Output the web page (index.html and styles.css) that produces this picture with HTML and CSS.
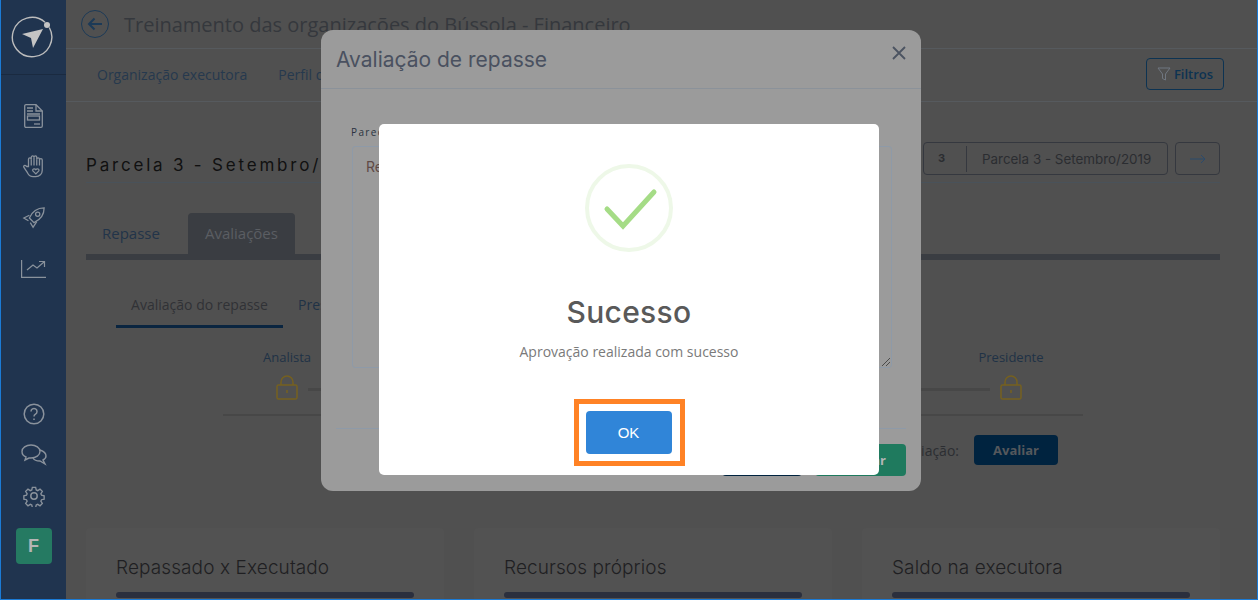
FILE: index.html
```html
<!DOCTYPE html>
<html lang="pt-BR">
    <head>
        <meta charset="UTF-8">
        <meta name="viewport" content="width=device-width, initial-scale=1.0">
        <title>Treinamento das organizações do Bússola - Financeiro</title>
        <link rel="stylesheet" href="styles.css">
    </head>
    <body>
        <div class="app">
            <nav class="sidebar">
                <div class="logo">
                    <svg width="42" height="42" viewBox="0 0 42 42" fill="none">
                        <path d="M38.300 11.500A19.700 19.700 0 1 1 34 6.200" stroke="#bdbdbd" stroke-width="1.400"/>
                        <circle cx="36" cy="9" r="3" fill="#c4c4c4"/>
                        <path d="M32 13 11 18l9 4 2 10z" fill="#c4c4c4"/>
                    </svg>
                </div>
                <div class="nav-icons">
                    <svg width="19" height="24" viewBox="0 0 19 24" fill="none" stroke="#8a929c" stroke-width="1.300">
                        <path d="M2 .7h10l6.300 6.300v15a1.300 1.300 0 0 1-1.300 1.300H2A1.300 1.300 0 0 1 .7 22V2A1.300 1.300 0 0 1 2 .7z"/>
                        <path d="M12 .7V7h6.300M3 4h6M3 7h6M3 10h13"/>
                        <rect x="3.500" y="12" width="12" height="4"/>
                        <path d="M10 20h6"/>
                    </svg>
                    <svg width="22" height="25" viewBox="0 0 24 26" fill="none" stroke="#8a929c" stroke-width="1.400">
                        <path d="M6 13V5a1.500 1.500 0 0 1 3 0V3a1.500 1.500 0 0 1 3 0 1.500 1.500 0 0 1 3 0v2a1.500 1.500 0 0 1 3 0v1a1.500 1.500 0 0 1 3 0v11c0 4-3 7-7 7h-3c-3 0-5-2-6-4l-4-6c-1-2 1-3 3-1z"/>
                        <path d="M9 5v7M12 3v9M15 5v7M18 6v6"/>
                        <path d="M14 21l-3-3c-1.500-2 1.500-3.500 3-1.500 1.500-2 4.500-.5 3 1.500z"/>
                    </svg>
                    <svg class="nav-rocket" width="24" height="24" viewBox="0 0 26 26" fill="none" stroke="#8a929c" stroke-width="1.400">
                        <path d="M8 13C11 6 17 2 24 2c0 7-4 13-11 16z"/>
                        <circle cx="17" cy="9" r="2.300"/>
                        <path d="M8 10 2 13l5 3M16 17l-4 6-3-5"/>
                    </svg>
                    <svg class="nav-chart" width="25" height="18" viewBox="0 0 25 18" fill="none" stroke="#8a929c" stroke-width="1.200">
                        <path d="M.6 0v17.400H25"/>
                        <path d="M6 10l6-5 4 3 7-6M18 1.500h5.500V7"/>
                    </svg>
                </div>
                <div class="nav-bottom">
                    <svg width="22" height="22" viewBox="0 0 22 22" fill="none" stroke="#8a929c" stroke-width="1.500">
                        <circle cx="11" cy="11" r="9.800"/>
                        <path d="M8 8.500a3 3 0 1 1 4.500 2.600c-1 .6-1.500 1.200-1.500 2.400"/>
                        <path d="M11 15.500v1.500"/>
                    </svg>
                    <svg width="26" height="22" viewBox="0 0 26 22" fill="none" stroke="#8a929c" stroke-width="1.400">
                        <path d="M10 1c5 0 9 3 9 6.500S15 14 10 14H8l-4 2 1-3C2.500 12 1 10 1 7.500 1 4 5 1 10 1z"/>
                        <path d="M19 6c3 1 6 3 6 6 0 2-1 3-3 4l2 4-5-3c-3 0-6-1-7-3"/>
                    </svg>
                    <svg width="22" height="22" viewBox="0 0 24 24" fill="none" stroke="#8a929c" stroke-width="1.600">
                        <circle cx="12" cy="12" r="3.500"/>
                        <path d="M10 1.500h4l.7 3.200 1.800.8 2.800-1.800 2.800 2.800-1.800 2.800.8 1.800 3.200.7v4l-3.200.7-.8 1.800 1.800 2.800-2.800 2.800-2.800-1.800-1.800.8-.7 3.200h-4l-.7-3.200-1.800-.8-2.800 1.800-2.800-2.800 1.800-2.800-.8-1.800-3.200-.7v-4l3.200-.7.8-1.800-1.800-2.800 2.800-2.800 2.800 1.800 1.800-.8z" transform="translate(1.200 1.200) scale(.9)"/>
                    </svg>
                    <div class="avatar">F</div>
                </div>
            </nav>

            <main class="main">
                <header class="title-row">
                    <span class="back-btn">
                        <svg width="16" height="14" viewBox="0 0 16 14" fill="none" stroke="#1c3a57" stroke-width="2">
                            <path d="M15 7H2M7.500 1.500 2 7l5.500 5.500"/>
                        </svg>
                    </span>
                    <h1>Treinamento das organizações do Bússola - Financeiro</h1>
                </header>

                <div class="top-tabs">
                    <a>Organização executora</a>
                    <a>Perfil da organização</a>
                    <button class="filter-btn">
                        <svg width="14" height="14" viewBox="0 0 14 14" fill="none" stroke="#6f7680" stroke-width="1">
                            <path d="M1 1h12L8.500 7v6l-3-1.500V7z"/>
                        </svg>
                        Filtros
                    </button>
                </div>

                <section class="content">
                    <div class="parcela-row">
                        <h2>Parcela 3 - Setembro/2019</h2>
                        <div class="parcela-select">
                            <span class="parcela-num">3</span>
                            <span class="parcela-name">Parcela 3 - Setembro/2019</span>
                        </div>
                        <button class="next-btn">
                            <svg width="16" height="10" viewBox="0 0 16 10" fill="none" stroke="#2b4a6b" stroke-width="1">
                                <path d="M0 5h15M11 1l4 4-4 4"/>
                            </svg>
                        </button>
                    </div>

                    <div class="tabs">
                        <a>Repasse</a>
                        <a class="active">Avaliações</a>
                    </div>

                    <div class="panel">
                        <div class="sub-tabs">
                            <a class="active">Avaliação do repasse</a>
                            <a>Prestação de contas</a>
                        </div>
                        <div class="steps">
                            <div class="step">
                                <span>Analista</span>
                                <svg width="22" height="26" viewBox="0 0 22 26" fill="none" stroke="#75601f" stroke-width="1.500">
                                    <rect x="1" y="10" width="20" height="14" rx="1.500"/>
                                    <path d="M5 10V7a6 6 0 0 1 12 0v3M11 15v3"/>
                                </svg>
                            </div>
                            <div class="step-line"></div>
                            <div class="step">
                                <span>Presidente</span>
                                <svg width="22" height="26" viewBox="0 0 22 26" fill="none" stroke="#75601f" stroke-width="1.500">
                                    <rect x="1" y="10" width="20" height="14" rx="1.500"/>
                                    <path d="M5 10V7a6 6 0 0 1 12 0v3M11 15v3"/>
                                </svg>
                            </div>
                        </div>
                        <div class="panel-actions">
                            <span>Avaliação:</span>
                            <button class="avaliar-btn">Avaliar</button>
                        </div>
                    </div>

                    <div class="cards">
                        <div class="card">
                            <h3>Repassado x Executado</h3>
                            <div class="bar"></div>
                        </div>
                        <div class="card">
                            <h3>Recursos próprios</h3>
                            <div class="bar"></div>
                        </div>
                        <div class="card">
                            <h3>Saldo na executora</h3>
                            <div class="bar"></div>
                        </div>
                    </div>
                </section>
            </main>
        </div>

        <div class="modal">
            <div class="modal-head">
                <h4>Avaliação de repasse</h4>
                <svg width="14" height="14" viewBox="0 0 14 14" fill="none" stroke="#4b5361" stroke-width="1.800">
                    <path d="M1 1l12 12M13 1 1 13"/>
                </svg>
            </div>
            <div class="modal-body">
                <label>Parecer</label>
                <div class="fake-textarea">Recurso aprovado
                    <svg class="grip" width="8" height="8" viewBox="0 0 8 8" stroke="#4a4a4a" stroke-width="1">
                        <path d="M0 8l8-8M4 8l4-4"/>
                    </svg>
                </div>
            </div>
            <div class="modal-foot">
                <button class="btn-cancel">Cancelar</button>
                <button class="btn-save">Salvar</button>
            </div>
        </div>

        <div class="alert">
            <svg class="alert-icon" width="88" height="88" viewBox="0 0 88 88" fill="none">
                <circle cx="44" cy="44" r="42" stroke="#eef8e8" stroke-width="4"/>
                <path d="M22 45l16 17 31-34" stroke="#a5dc86" stroke-width="5" stroke-linecap="round"/>
            </svg>
            <h5>Sucesso</h5>
            <p>Aprovação realizada com sucesso</p>
            <div class="ok-mark">
                <button class="ok-btn">OK</button>
            </div>
        </div>
    </body>
</html>
```

FILE: styles.css
```css
* {
    box-sizing: border-box;
}

body {
    margin: 0;
    width: 1258px;
    height: 600px;
    overflow: hidden;
    font-family: "Open Sans", sans-serif;
    background-color: #505050;
    border: 1px solid #1b7bd6;
    border-top: none;
}

h1, h2, h3, h4, h5, p {
    margin: 0;
    font-weight: normal;
}

button {
    font-family: inherit;
    border: none;
}

.app {
    display: flex;
    height: 599px;
}

/* sidebar */
.sidebar {
    width: 65px;
    flex: none;
    display: flex;
    flex-direction: column;
    align-items: center;
    background-color: #20344f;
}

.logo {
    width: 100%;
    height: 75px;
    display: flex;
    align-items: center;
    justify-content: center;
    border-bottom: 1px solid #1a2a40;
    padding-right: 4px;
}

.nav-icons {
    display: flex;
    flex-direction: column;
    align-items: center;
    gap: 26px;
    margin-top: 29px;
}

.nav-rocket {
    margin-top: 1px;
}

.nav-chart {
    margin-top: 4px;
}

.nav-bottom {
    margin-top: auto;
    display: flex;
    flex-direction: column;
    align-items: center;
    gap: 19px;
    padding-bottom: 35px;
}

.avatar {
    width: 36px;
    height: 36px;
    margin-top: 2px;
    border-radius: 4px;
    background-color: #257a62;
    color: #b5b5b5;
    font-family: "Liberation Sans", sans-serif;
    font-size: 18px;
    font-weight: bold;
    line-height: 36px;
    text-align: center;
}

/* main area */
.main {
    flex: 1;
    min-width: 0;
}

.title-row {
    height: 49px;
    display: flex;
    align-items: center;
    gap: 15px;
    padding-left: 15px;
    border-bottom: 1px solid #565a5e;
}

.back-btn {
    width: 28px;
    height: 28px;
    display: flex;
    align-items: center;
    justify-content: center;
    border: 1px solid #1c3a57;
    border-radius: 50%;
}

.title-row h1 {
    font-size: 20px;
    color: #35383d;
    white-space: nowrap;
}

.top-tabs {
    height: 53px;
    display: flex;
    align-items: center;
    gap: 31px;
    padding: 0 33px 2px 31px;
    border-bottom: 1px solid #565a5e;
    font-size: 14px;
    color: #26394e;
}

.top-tabs a {
    white-space: nowrap;
}

.filter-btn {
    margin-left: auto;
    width: 78px;
    height: 32px;
    display: flex;
    align-items: center;
    justify-content: center;
    gap: 3px;
    background: none;
    border: 1px solid #0d3352;
    border-radius: 4px;
    color: #0d3352;
    font-size: 13px;
    font-weight: 600;
}

.content {
    padding: 0 37px 0 20px;
}

.parcela-row {
    height: 81px;
    display: flex;
    align-items: flex-end;
    padding-bottom: 7px;
    border-bottom: 1px solid #49525a;
}

.parcela-row h2 {
    font-family: Inter, sans-serif;
    font-size: 17px;
    letter-spacing: 2.800px;
    color: #111;
    white-space: nowrap;
}

.parcela-select {
    margin-left: auto;
    width: 245px;
    height: 33px;
    display: flex;
    align-items: center;
    border: 1px solid #35383f;
    border-radius: 4px;
    font-family: Inter, sans-serif;
    font-size: 13.400px;
    color: #2b2d31;
}

.parcela-num {
    width: 43px;
    height: 26px;
    line-height: 24px;
    padding-left: 14px;
    border-right: 1px solid #35383f;
    font-size: 11px;
    font-weight: 700;
}

.parcela-name {
    padding-left: 15px;
    white-space: nowrap;
}

.next-btn {
    width: 45px;
    height: 33px;
    margin-left: 7px;
    background: none;
    border: 1px solid #35383f;
    border-radius: 4px;
}

.tabs {
    height: 71px;
    display: flex;
    align-items: flex-end;
    font-size: 15px;
    color: #223449;
}

.tabs a {
    height: 41px;
    line-height: 41px;
    padding: 0 16px;
}

.tabs a.active {
    margin-left: 12px;
    padding: 0 17px;
    background-color: #3a3d42;
    border-radius: 4px 4px 0 0;
    color: #5b5e63;
}

.panel {
    height: 274px;
    padding: 0 30px;
    border-top: 6px solid #3a3d42;
}

.sub-tabs {
    height: 68px;
    display: flex;
    align-items: flex-end;
    gap: 15px;
    font-size: 14px;
    color: #1f3246;
}

.sub-tabs a {
    height: 42px;
    line-height: 38px;
    white-space: nowrap;
}

.sub-tabs a.active {
    width: 167px;
    text-align: center;
    color: #303236;
    border-bottom: 3px solid #0a2540;
}

.steps {
    height: 88px;
    width: 860px;
    margin: 0 0 0 107px;
    padding: 20px 42px 0 34px;
    display: flex;
    justify-content: space-between;
    border-bottom: 2px solid #474747;
}

.step {
    width: 60px;
    display: flex;
    flex-direction: column;
    align-items: center;
    gap: 9px;
    font-size: 13px;
    color: #1f3246;
}

.step-line {
    flex: 1;
    height: 3px;
    margin: 40px -9px 0;
    background-color: #474747;
}

.panel-actions {
    display: flex;
    align-items: center;
    justify-content: flex-end;
    gap: 15px;
    padding: 19px 132px 0 0;
    font-size: 14px;
    color: #2c2e32;
}

.avaliar-btn {
    width: 84px;
    height: 30px;
    background-color: #00233f;
    border-radius: 4px;
    color: #55585c;
    font-size: 13px;
    font-weight: 700;
}

.cards {
    display: flex;
    gap: 30px;
}

.card {
    width: 358px;
    height: 100px;
    padding: 0 30px;
    background-color: #525252;
    border-radius: 4px;
}

.card h3 {
    font-family: Inter, sans-serif;
    font-size: 19px;
    font-weight: 300;
    letter-spacing: .1px;
    color: #1f1f22;
    line-height: 24px;
    padding-top: 28px;
    box-sizing: content-box;
}

.bar {
    width: 298px;
    height: 6px;
    margin-top: 12px;
    background-color: #2b2f3d;
    border-radius: 3px;
}

/* first modal, dimmed by the alert */
.modal {
    position: fixed;
    left: 321px;
    top: 30px;
    width: 600px;
    height: 461px;
    background-color: #9b9b9b;
    border-radius: 12px;
}

.modal-head {
    height: 59px;
    display: flex;
    align-items: center;
    justify-content: space-between;
    padding: 0 15px;
    border-bottom: 1px solid #8b929a;
}

.modal-head h4 {
    font-family: Inter, sans-serif;
    font-size: 21px;
    color: #4a5160;
}

.modal-head svg {
    margin: 0 0 12px;
}

.modal-body {
    height: 339px;
    padding: 36px 29px 0 30px;
}

.modal-body label {
    display: block;
    font-size: 10px;
    letter-spacing: 1.400px;
    color: #2a3340;
    line-height: 14px;
}

.fake-textarea {
    position: relative;
    height: 222px;
    margin: 7px 0 0 1px;
    padding: 11px 13px;
    border: 1px solid #8e9aa8;
    border-radius: 3px;
    font-family: Inter, sans-serif;
    font-size: 14px;
    color: #5f4a46;
}

.grip {
    position: absolute;
    right: 1px;
    bottom: 1px;
}

.modal-foot {
    margin: 0 15px;
    padding-top: 15px;
    display: flex;
    justify-content: flex-end;
    gap: 13px;
    border-top: 1px solid #8e9aa8;
}

.btn-cancel,
.btn-save {
    height: 32px;
    border-radius: 4px;
    color: #b5b5b5;
    font-size: 13px;
    font-weight: 700;
}

.btn-cancel {
    width: 80px;
    background-color: #00233f;
}

.btn-save {
    width: 91px;
    background-color: #1f7a5e;
    text-align: right;
    padding-right: 20px;
}

/* success alert */
.alert {
    position: fixed;
    left: 379px;
    top: 124px;
    width: 500px;
    height: 351px;
    display: flex;
    flex-direction: column;
    align-items: center;
    padding-top: 40px;
    background-color: #fff;
    border-radius: 5px;
}

.alert h5 {
    margin-top: 42px;
    font-family: Inter, sans-serif;
    font-size: 30px;
    font-weight: 500;
    letter-spacing: .3px;
    line-height: 36px;
    color: #595959;
}

.alert p {
    margin-top: 13px;
    font-size: 14px;
    line-height: 18px;
    color: #7a7a7a;
}

.ok-mark {
    margin-top: 38px;
    padding: 7px 8px 7px 7px;
    border: 5px solid #ff8225;
}

.ok-btn {
    display: block;
    width: 86px;
    height: 43px;
    background-color: #3085d8;
    border-radius: 4px;
    color: #fff;
    font-family: "Liberation Sans", sans-serif;
    font-size: 15px;
}
```
